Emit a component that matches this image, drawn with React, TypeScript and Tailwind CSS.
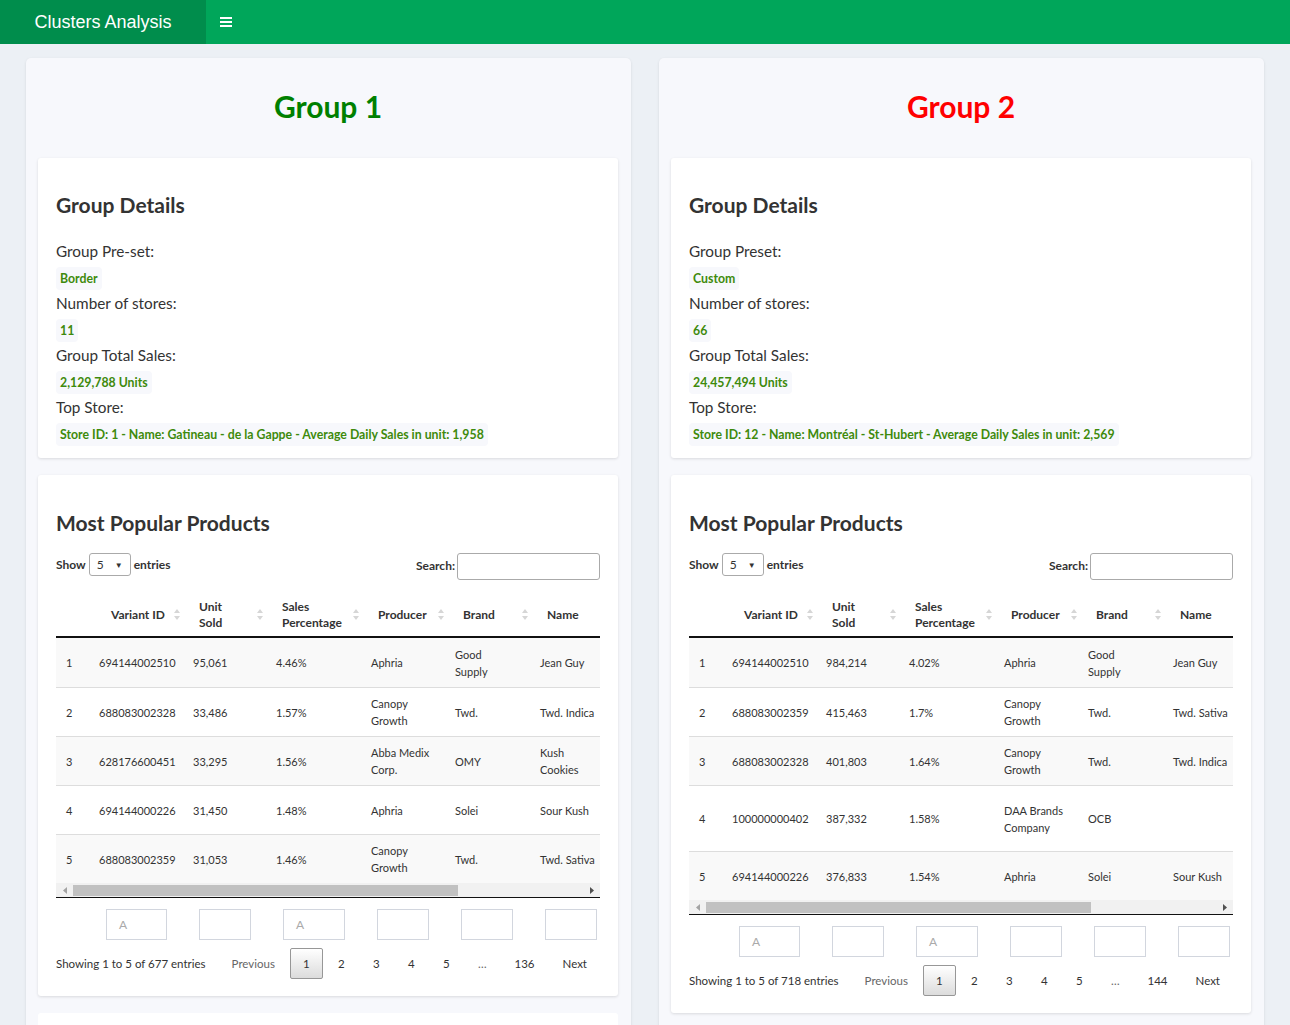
import React from 'react';

type Row = { id: string; variant: string; units: string; pct: string; producer: string; brand: string; name: string; h?: string };

const bodyCols = ['w-[33px]', 'w-[94px]', 'w-[83px]', 'w-[95px]', 'w-[84px]', 'w-[85px]', 'w-[200px]'];
const headCols = ['w-[45px]', 'w-[88px]', 'w-[83px]', 'w-[96px]', 'w-[85px]', 'w-[84px]', 'w-[200px]'];

const groups = [
  {
    title: 'Group 1',
    titleColor: 'text-[#008000]',
    presetLabel: 'Group Pre-set:',
    preset: 'Border',
    stores: '11',
    sales: '2,129,788 Units',
    top: 'Store ID: 1 - Name: Gatineau - de la Gappe - Average Daily Sales in unit: 1,958',
    showing: 'Showing 1 to 5 of 677 entries',
    last: '136',
    rows: [
      { id: '1', variant: '694144002510', units: '95,061', pct: '4.46%', producer: 'Aphria', brand: 'Good\nSupply', name: 'Jean Guy' },
      { id: '2', variant: '688083002328', units: '33,486', pct: '1.57%', producer: 'Canopy\nGrowth', brand: 'Twd.', name: 'Twd. Indica' },
      { id: '3', variant: '628176600451', units: '33,295', pct: '1.56%', producer: 'Abba Medix\nCorp.', brand: 'OMY', name: 'Kush\nCookies' },
      { id: '4', variant: '694144000226', units: '31,450', pct: '1.48%', producer: 'Aphria', brand: 'Solei', name: 'Sour Kush' },
      { id: '5', variant: '688083002359', units: '31,053', pct: '1.46%', producer: 'Canopy\nGrowth', brand: 'Twd.', name: 'Twd. Sativa' },
    ] as Row[],
  },
  {
    title: 'Group 2',
    titleColor: 'text-[#ff0000]',
    presetLabel: 'Group Preset:',
    preset: 'Custom',
    stores: '66',
    sales: '24,457,494 Units',
    top: 'Store ID: 12 - Name: Montréal - St-Hubert - Average Daily Sales in unit: 2,569',
    showing: 'Showing 1 to 5 of 718 entries',
    last: '144',
    rows: [
      { id: '1', variant: '694144002510', units: '984,214', pct: '4.02%', producer: 'Aphria', brand: 'Good\nSupply', name: 'Jean Guy' },
      { id: '2', variant: '688083002359', units: '415,463', pct: '1.7%', producer: 'Canopy\nGrowth', brand: 'Twd.', name: 'Twd. Sativa' },
      { id: '3', variant: '688083002328', units: '401,803', pct: '1.64%', producer: 'Canopy\nGrowth', brand: 'Twd.', name: 'Twd. Indica' },
      { id: '4', variant: '100000000402', units: '387,332', pct: '1.58%', producer: 'DAA Brands\nCompany', brand: 'OCB', name: '', h: 'h-[66px]' },
      { id: '5', variant: '694144000226', units: '376,833', pct: '1.54%', producer: 'Aphria', brand: 'Solei', name: 'Sour Kush' },
    ] as Row[],
  },
];

function SortIcon() {
  return (
    <svg width="6" height="11" viewBox="0 0 6 11" className="shrink-0">
      <path d="M3 0 L6 4 L0 4 Z" fill="#d6d6d6" />
      <path d="M3 11 L6 7 L0 7 Z" fill="#d6d6d6" />
    </svg>
  );
}

function Badge({ children }: { children: React.ReactNode }) {
  return (
    <div className="inline-block rounded-[4px] bg-[#f7f8fc] px-[4px] h-[23px] leading-[23px] text-[12.3px] font-bold text-[#3e8a0c]">
      {children}
    </div>
  );
}

function DetailsCard({ g }: { g: (typeof groups)[number] }) {
  const items: [string, string][] = [
    [g.presetLabel, g.preset],
    ['Number of stores:', g.stores],
    ['Group Total Sales:', g.sales],
    ['Top Store:', g.top],
  ];
  return (
    <div className="bg-white rounded-[3px] shadow-[0_1px_3px_rgba(0,0,0,0.12)] px-[18px] pt-[33px] pb-[12px]">
      <h3 className="text-[21px] font-bold text-[#333] leading-[28px] mb-[19px]">Group Details</h3>
      <div className="flex flex-col">
        {items.map(([label, value]) => (
          <div key={label} className="flex flex-col items-start">
            <div className="text-[15.3px] text-[#333] leading-[26px] h-[26px]">{label}</div>
            <div className="h-[26px] pt-[1px]">
              <Badge>{value}</Badge>
            </div>
          </div>
        ))}
      </div>
    </div>
  );
}

function FilterBox({ ph, w }: { ph?: string; w: string }) {
  return (
    <div className={`${w} h-[31px] border border-[#d2d6de] flex items-center pl-[12px] text-[12px] text-[#aaa]`}>{ph}</div>
  );
}

function ProductsCard({ g }: { g: (typeof groups)[number] }) {
  const heads = ['', 'Variant ID', 'Unit\nSold', 'Sales\nPercentage', 'Producer', 'Brand', 'Name'];
  return (
    <div className="bg-white rounded-[3px] shadow-[0_1px_3px_rgba(0,0,0,0.12)] px-[18px] pt-[34px] pb-[17px]">
      <h3 className="text-[21px] font-bold text-[#333] leading-[28px] mb-[15px]">Most Popular Products</h3>

      <div className="flex items-center justify-between text-[12px] font-bold text-[#333] h-[28px]">
        <div className="flex items-center gap-[3px] -mt-[3px]">
          <span>Show</span>
          <div className="w-[42px] h-[23px] border border-[#aaa] rounded-[3px] flex items-center justify-between px-[7px] font-normal">
            <span>5</span>
            <span className="text-[8px]">▼</span>
          </div>
          <span>entries</span>
        </div>
        <div className="flex items-center gap-[2px]">
          <span>Search:</span>
          <div className="w-[143px] h-[27px] border border-[#aaa] rounded-[3px] bg-white" />
        </div>
      </div>

      <div className="mt-[13px] w-full overflow-hidden">
        <div className="w-[760px]">
          <div className="flex h-[45px] items-center border-b-2 border-[#111] text-[12px] font-bold text-[#333] leading-[16px]">
            {heads.map((h, i) => (
              <div key={i} className={`${headCols[i]} flex items-center justify-between pl-[10px] pr-[9px] whitespace-pre-line`}>
                <span>{h}</span>
                {i > 0 && i < 6 ? <SortIcon /> : null}
              </div>
            ))}
          </div>
          {g.rows.map((r, ri) => {
            const cells = [r.id, r.variant, r.units, r.pct, r.producer, r.brand, r.name];
            return (
              <div
                key={ri}
                className={`flex items-center ${r.h ?? 'h-[49px]'} ${ri % 2 === 0 ? 'bg-[#f9f9f9]' : 'bg-white'} ${ri > 0 ? 'border-t border-[#ddd]' : ''} text-[11px] text-[#333] leading-[17px]`}
              >
                {cells.map((c, i) => (
                  <div key={i} className={`${bodyCols[i]} pl-[10px] whitespace-pre-line`}>
                    {c}
                  </div>
                ))}
              </div>
            );
          })}
        </div>
      </div>
      <div className="h-[15px] bg-[#f1f1f1] flex items-center border-b border-[#111]">
        <div className="w-[17px] flex justify-center">
          <svg width="4" height="7" viewBox="0 0 4 7"><path d="M4 0 L0 3.5 L4 7 Z" fill="#a3a3a3" /></svg>
        </div>
        <div className="w-[385px] h-[11px] bg-[#c1c1c1]" />
        <div className="flex-1" />
        <div className="w-[17px] flex justify-center">
          <svg width="4" height="7" viewBox="0 0 4 7"><path d="M0 0 L4 3.5 L0 7 Z" fill="#505050" /></svg>
        </div>
      </div>

      <div className="flex mt-[11px]">
        <div className="w-[50px]" />
        <FilterBox ph="A" w="w-[61px]" />
        <div className="w-[32px]" />
        <FilterBox w="w-[52px]" />
        <div className="w-[32px]" />
        <FilterBox ph="A" w="w-[62px]" />
        <div className="w-[32px]" />
        <FilterBox w="w-[52px]" />
        <div className="w-[32px]" />
        <FilterBox w="w-[52px]" />
        <div className="w-[32px]" />
        <FilterBox w="w-[52px]" />
      </div>

      <div className="flex items-center justify-between mt-[8px] text-[11.5px] text-[#333]">
        <span className="whitespace-nowrap">{g.showing}</span>
        <div className="flex items-center">
          {['Previous', '1', '2', '3', '4', '5', '…', g.last, 'Next'].map((p, i) => (
            <div
              key={i}
              className={`h-[31px] min-w-[33px] px-[12px] ml-[2px] flex items-center justify-center rounded-[2px] ${
                p === '1'
                  ? 'border border-[#979797] bg-gradient-to-b from-[#ffffff] to-[#dcdcdc]'
                  : 'border border-transparent'
              } ${p === 'Previous' || p === '…' ? 'text-[#666]' : 'text-[#333]'}`}
            >
              {p}
            </div>
          ))}
        </div>
      </div>
    </div>
  );
}

function GroupColumn({ g }: { g: (typeof groups)[number] }) {
  return (
    <div className="bg-[#f7f8fc] rounded-[5px] shadow-[0_1px_3px_rgba(0,0,0,0.1)] pl-[12px] pr-[13px] pt-[28px]">
      <h1 className={`text-center text-[30px] font-bold leading-[40px] ${g.titleColor} mb-[32px]`}>{g.title}</h1>
      <div className="flex flex-col gap-[17px]">
        <DetailsCard g={g} />
        <ProductsCard g={g} />
        <div className="bg-white rounded-[3px] h-[40px]" />
      </div>
    </div>
  );
}

export default function App() {
  return (
    <div className="min-h-screen h-[1025px] overflow-hidden bg-[#ecf0f5] font-['Lato',sans-serif]">
      <header className="flex h-[44px] bg-[#00a65a]">
        <div className="w-[206px] bg-[#008d4c] flex items-center justify-center text-white text-[18px] font-['Liberation_Sans',sans-serif]">
          Clusters Analysis
        </div>
        <div className="pl-[14px] flex items-center">
          <svg width="12" height="10" viewBox="0 0 12 10">
            <rect x="0" y="0" width="12" height="2" fill="#fff" />
            <rect x="0" y="4" width="12" height="2" fill="#fff" />
            <rect x="0" y="8" width="12" height="2" fill="#fff" />
          </svg>
        </div>
      </header>
      <div className="grid grid-cols-2 gap-[28px] px-[26px] pt-[14px]">
        {groups.map((g) => (
          <GroupColumn key={g.title} g={g} />
        ))}
      </div>
    </div>
  );
}
